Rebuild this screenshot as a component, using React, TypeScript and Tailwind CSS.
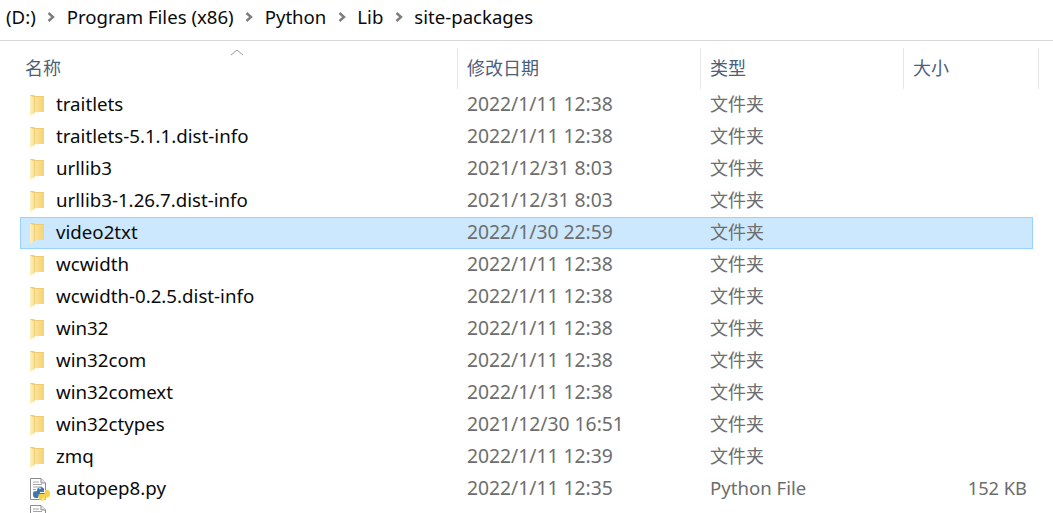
import React from "react";

const Folder = () => (
  <svg width="16" height="22" viewBox="0 0 16 22" className="shrink-0">
    <defs>
      <linearGradient id="fg" x1="0" y1="0" x2="1" y2="0">
        <stop offset="0" stopColor="#fbe39a" />
        <stop offset="1" stopColor="#f6d272" />
      </linearGradient>
      <linearGradient id="fl" x1="0" y1="0" x2="1" y2="0">
        <stop offset="0" stopColor="#fdf0c0" />
        <stop offset="1" stopColor="#fbe08e" />
      </linearGradient>
    </defs>
    <path d="M1 1 H5 L6 2 H15 V18 H1 Z" fill="#f0cd6e" />
    <path d="M6 3 H15 V18 H6 Z" fill="url(#fg)" />
    <path d="M1 1.500 L5.500 3.500 V19 L1 22 Z" fill="url(#fl)" />
    <path d="M5.500 3.500 V19" stroke="#eccb74" strokeWidth="0.8" />
  </svg>
);

const PyIcon = () => (
  <svg width="22" height="23" viewBox="0 0 22 23" className="shrink-0">
    <path d="M1.500 0.500 H12 L16.500 5 V21.500 H1.500 Z" fill="#fff" stroke="#8c8c8c" />
    <path d="M12 0.500 V5 H16.500" fill="#e8e8e8" stroke="#8c8c8c" />
    <path d="M4 4 H10 M4 6.500 H13 M4 9 H13 M4 11.500 H7 M4 14 H6 M4 16.500 H5" stroke="#a6a6a6" />
    <path d="M8 12 C8 8.500 15 8.500 15 11 V14 H11 V15 H15 H17 V16 C17 17.500 16 18 14 18 H11 C9 18 9 19 9 20 H6.500 C4.500 20 4 18 4 16 C4 14 5 13 8 13 Z" fill="#3c78b0" />
    <path d="M9.500 20 V17.500 C9.500 16.500 10 16 12 16 H14.500 C16 16 16 15 16 12 H18.500 C20.500 12 21 14 21 16 C21 18 20 19.500 18 19.500 H14 V20 H17 V21 C17 23 10 23.500 9.500 20 Z" fill="#f6d04a" />
    <circle cx="11" cy="10.500" r="0.800" fill="#fff" />
    <circle cx="14" cy="21" r="0.800" fill="#fff" />
  </svg>
);

const Chevron = () => (
  <svg width="8" height="10" viewBox="0 0 8 10" className="shrink-0">
    <path d="M1.500 1 L6 5 L1.500 9" fill="none" stroke="#7d7d7d" strokeWidth="2.400" />
  </svg>
);

type Row = { name: string; date: string; type?: string; size?: string; py?: boolean; sel?: boolean };

const rows: Row[] = [
  { name: "traitlets", date: "2022/1/11 12:38" },
  { name: "traitlets-5.1.1.dist-info", date: "2022/1/11 12:38" },
  { name: "urllib3", date: "2021/12/31 8:03" },
  { name: "urllib3-1.26.7.dist-info", date: "2021/12/31 8:03" },
  { name: "video2txt", date: "2022/1/30 22:59", sel: true },
  { name: "wcwidth", date: "2022/1/11 12:38" },
  { name: "wcwidth-0.2.5.dist-info", date: "2022/1/11 12:38" },
  { name: "win32", date: "2022/1/11 12:38" },
  { name: "win32com", date: "2022/1/11 12:38" },
  { name: "win32comext", date: "2022/1/11 12:38" },
  { name: "win32ctypes", date: "2021/12/30 16:51" },
  { name: "zmq", date: "2022/1/11 12:39" },
  { name: "autopep8.py", date: "2022/1/11 12:35", type: "Python File", size: "152 KB", py: true },
];

const crumbs = ["Program Files (x86)", "Python", "Lib", "site-packages"];
const font = "font-['Noto_Sans','Noto_Sans_CJK_SC',sans-serif]";

const Head = ({ label, w }: { label: string; w: string }) => (
  <div className={`${w} flex h-full items-center border-r border-[#e5e5e5] pl-[9px] pb-[2px] text-[#4c607a]`}>{label}</div>
);

export default function App() {
  return (
    <div className={`h-[513px] w-[1053px] overflow-hidden bg-white text-[18px] leading-[24px] ${font}`}>
      <div className="flex h-[41px] items-center gap-[11.500px] border-b border-[#d9d9d9] pb-[6px] pl-[6px] text-[18.600px] text-[#0a0a0a]">
        <span>(D:)</span>
        {crumbs.map((c) => (
          <React.Fragment key={c}>
            <Chevron />
            <span>{c}</span>
          </React.Fragment>
        ))}
      </div>
      <div className="relative flex h-[48px] items-center pl-[20px] pt-[7px]">
        <svg width="14" height="7" viewBox="0 0 14 7" className="absolute left-[230px] top-[8px]">
          <path d="M1 6 L7 1 L13 6" fill="none" stroke="#9a9a9a" />
        </svg>
        <div className="flex h-[41px] w-[438px] items-center pb-[2px] pl-[5px] text-[#4c607a] border-r border-[#e5e5e5]">名称</div>
        <Head label="修改日期" w="w-[243px]" />
        <Head label="类型" w="w-[203px]" />
        <Head label="大小" w="w-[135px]" />
      </div>
      <div className="flex flex-col pl-[20px]">
        {rows.map((r) => (
          <div
            key={r.name}
            className={`flex h-[32px] w-[1013px] items-center border pb-[2px] ${r.sel ? "border-[#99d1ff] bg-[#cce8ff]" : "border-transparent"}`}
          >
            <div className="flex w-[437px] items-center pl-[8px]">
              <div className="w-[27px] pt-[2px]">{r.py ? <PyIcon /> : <Folder />}</div>
              <span className="text-[18.700px] text-[#0a0a0a]">{r.name}</span>
            </div>
            <div className="w-[243px] pl-[9px] text-[19.300px] text-[#6d6d6d]">{r.date}</div>
            <div className={`w-[203px] pl-[9px] text-[#6d6d6d] ${r.py ? "text-[18.600px]" : ""}`}>{r.type ?? "文件夹"}</div>
            <div className="w-[125px] pr-[2px] text-right text-[18.300px] text-[#6d6d6d]">{r.size}</div>
          </div>
        ))}
        <div className="pl-[9px]"><PyIcon /></div>
      </div>
    </div>
  );
}
